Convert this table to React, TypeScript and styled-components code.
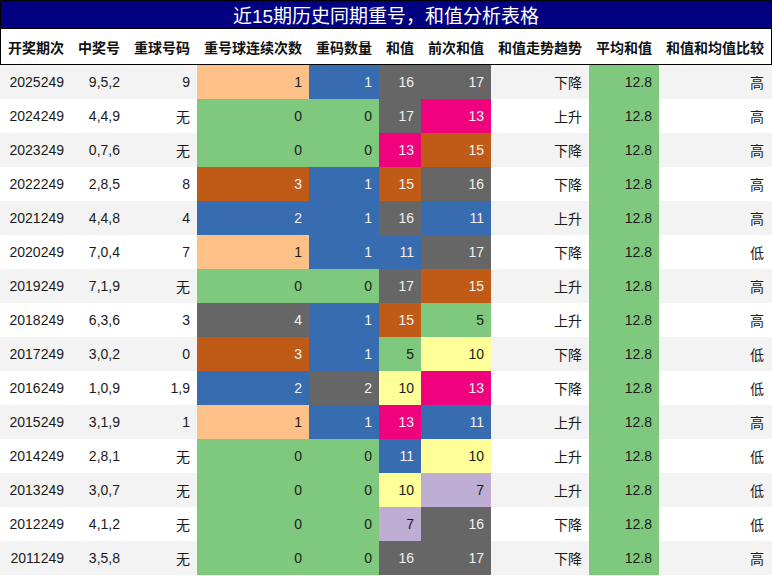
import React from "react";
import styled, { createGlobalStyle } from "styled-components";

const Global = createGlobalStyle`
  html, body { margin: 0; padding: 0; background: #ffffff; }
  body { font-family: "Liberation Sans", "Noto Sans CJK SC", sans-serif; }
`;

const C = {
  green: "#7fc97f",
  lav: "#beaed4",
  orange: "#fdc086",
  yellow: "#ffff99",
  blue: "#386cb0",
  pink: "#f0027f",
  brown: "#bf5b17",
  gray: "#666666",
};

const dark = new Set([C.blue, C.pink, C.brown, C.gray]);

const streakColor: Record<number, string> = { 0: C.green, 1: C.orange, 2: C.blue, 3: C.brown, 4: C.gray };
const countColor: Record<number, string> = { 0: C.green, 1: C.blue, 2: C.gray };
const sumColor: Record<number, string> = {
  5: C.green, 7: C.lav, 10: C.yellow, 11: C.blue, 13: C.pink, 15: C.brown, 16: C.gray, 17: C.gray,
};

const COLS = "70px 56px 70px 112px 70px 42px 70px 98px 70px 112px";

const Page = styled.div`
  width: 772px;
  height: 576px;
  overflow: hidden;
  color: #1a1a1a;
`;

const TitleBar = styled.div`
  height: 27px;
  border: 1px solid #000;
  background: #000080;
  color: #ffffff;
  display: flex;
  align-items: center;
  justify-content: center;
  font-size: 19px;
  font-family: "Liberation Sans", "Noto Sans CJK SC", sans-serif;
`;

const HeaderRow = styled.div`
  display: grid;
  grid-template-columns: ${COLS};
  height: 35px;
  border-left: 1px solid #000;
  border-right: 1px solid #000;
  border-bottom: 1px solid #000;
  background: #ffffff;
`;

const HeadCell = styled.div`
  display: flex;
  align-items: center;
  justify-content: flex-end;
  padding-right: 7px;
  font-weight: bold;
  font-size: 14px;
  font-family: "Noto Sans CJK SC", sans-serif;
  color: #111;
  white-space: nowrap;
`;

const Row = styled.div<{ $alt: boolean }>`
  display: grid;
  grid-template-columns: ${COLS};
  height: 34px;
  padding-left: 1px;
  background: ${(p) => (p.$alt ? "#f3f3f3" : "#ffffff")};
`;

const Cell = styled.div<{ $bg?: string }>`
  display: flex;
  align-items: center;
  justify-content: flex-end;
  padding-right: 7px;
  font-size: 14px;
  white-space: nowrap;
  background: ${(p) => p.$bg ?? "transparent"};
  color: ${(p) => (p.$bg && dark.has(p.$bg) ? "#f2f2f2" : "#1a1a1a")};
`;

type R = [string, string, string, number, number, number, number, string, string];

const rows: R[] = [
  ["2025249", "9,5,2", "9", 1, 1, 16, 17, "下降", "高"],
  ["2024249", "4,4,9", "无", 0, 0, 17, 13, "上升", "高"],
  ["2023249", "0,7,6", "无", 0, 0, 13, 15, "下降", "高"],
  ["2022249", "2,8,5", "8", 3, 1, 15, 16, "下降", "高"],
  ["2021249", "4,4,8", "4", 2, 1, 16, 11, "上升", "高"],
  ["2020249", "7,0,4", "7", 1, 1, 11, 17, "下降", "低"],
  ["2019249", "7,1,9", "无", 0, 0, 17, 15, "上升", "高"],
  ["2018249", "6,3,6", "3", 4, 1, 15, 5, "上升", "高"],
  ["2017249", "3,0,2", "0", 3, 1, 5, 10, "下降", "低"],
  ["2016249", "1,0,9", "1,9", 2, 2, 10, 13, "下降", "低"],
  ["2015249", "3,1,9", "1", 1, 1, 13, 11, "上升", "高"],
  ["2014249", "2,8,1", "无", 0, 0, 11, 10, "上升", "低"],
  ["2013249", "3,0,7", "无", 0, 0, 10, 7, "上升", "低"],
  ["2012249", "4,1,2", "无", 0, 0, 7, 16, "下降", "低"],
  ["2011249", "3,5,8", "无", 0, 0, 16, 17, "下降", "高"],
];

const headers = [
  "开奖期次", "中奖号", "重球号码", "重号球连续次数", "重码数量",
  "和值", "前次和值", "和值走势趋势", "平均和值", "和值和均值比较",
];

export default function App() {
  return (
    <Page>
      <Global />
      <TitleBar>近15期历史同期重号，和值分析表格</TitleBar>
      <HeaderRow>
        {headers.map((h) => (
          <HeadCell key={h}>{h}</HeadCell>
        ))}
      </HeaderRow>
      {rows.map((r, i) => (
        <Row key={r[0]} $alt={i % 2 === 0}>
          <Cell>{r[0]}</Cell>
          <Cell>{r[1]}</Cell>
          <Cell>{r[2]}</Cell>
          <Cell $bg={streakColor[r[3]]}>{r[3]}</Cell>
          <Cell $bg={countColor[r[4]]}>{r[4]}</Cell>
          <Cell $bg={sumColor[r[5]]}>{r[5]}</Cell>
          <Cell $bg={sumColor[r[6]]}>{r[6]}</Cell>
          <Cell>{r[7]}</Cell>
          <Cell $bg={C.green}>12.8</Cell>
          <Cell>{r[8]}</Cell>
        </Row>
      ))}
    </Page>
  );
}
